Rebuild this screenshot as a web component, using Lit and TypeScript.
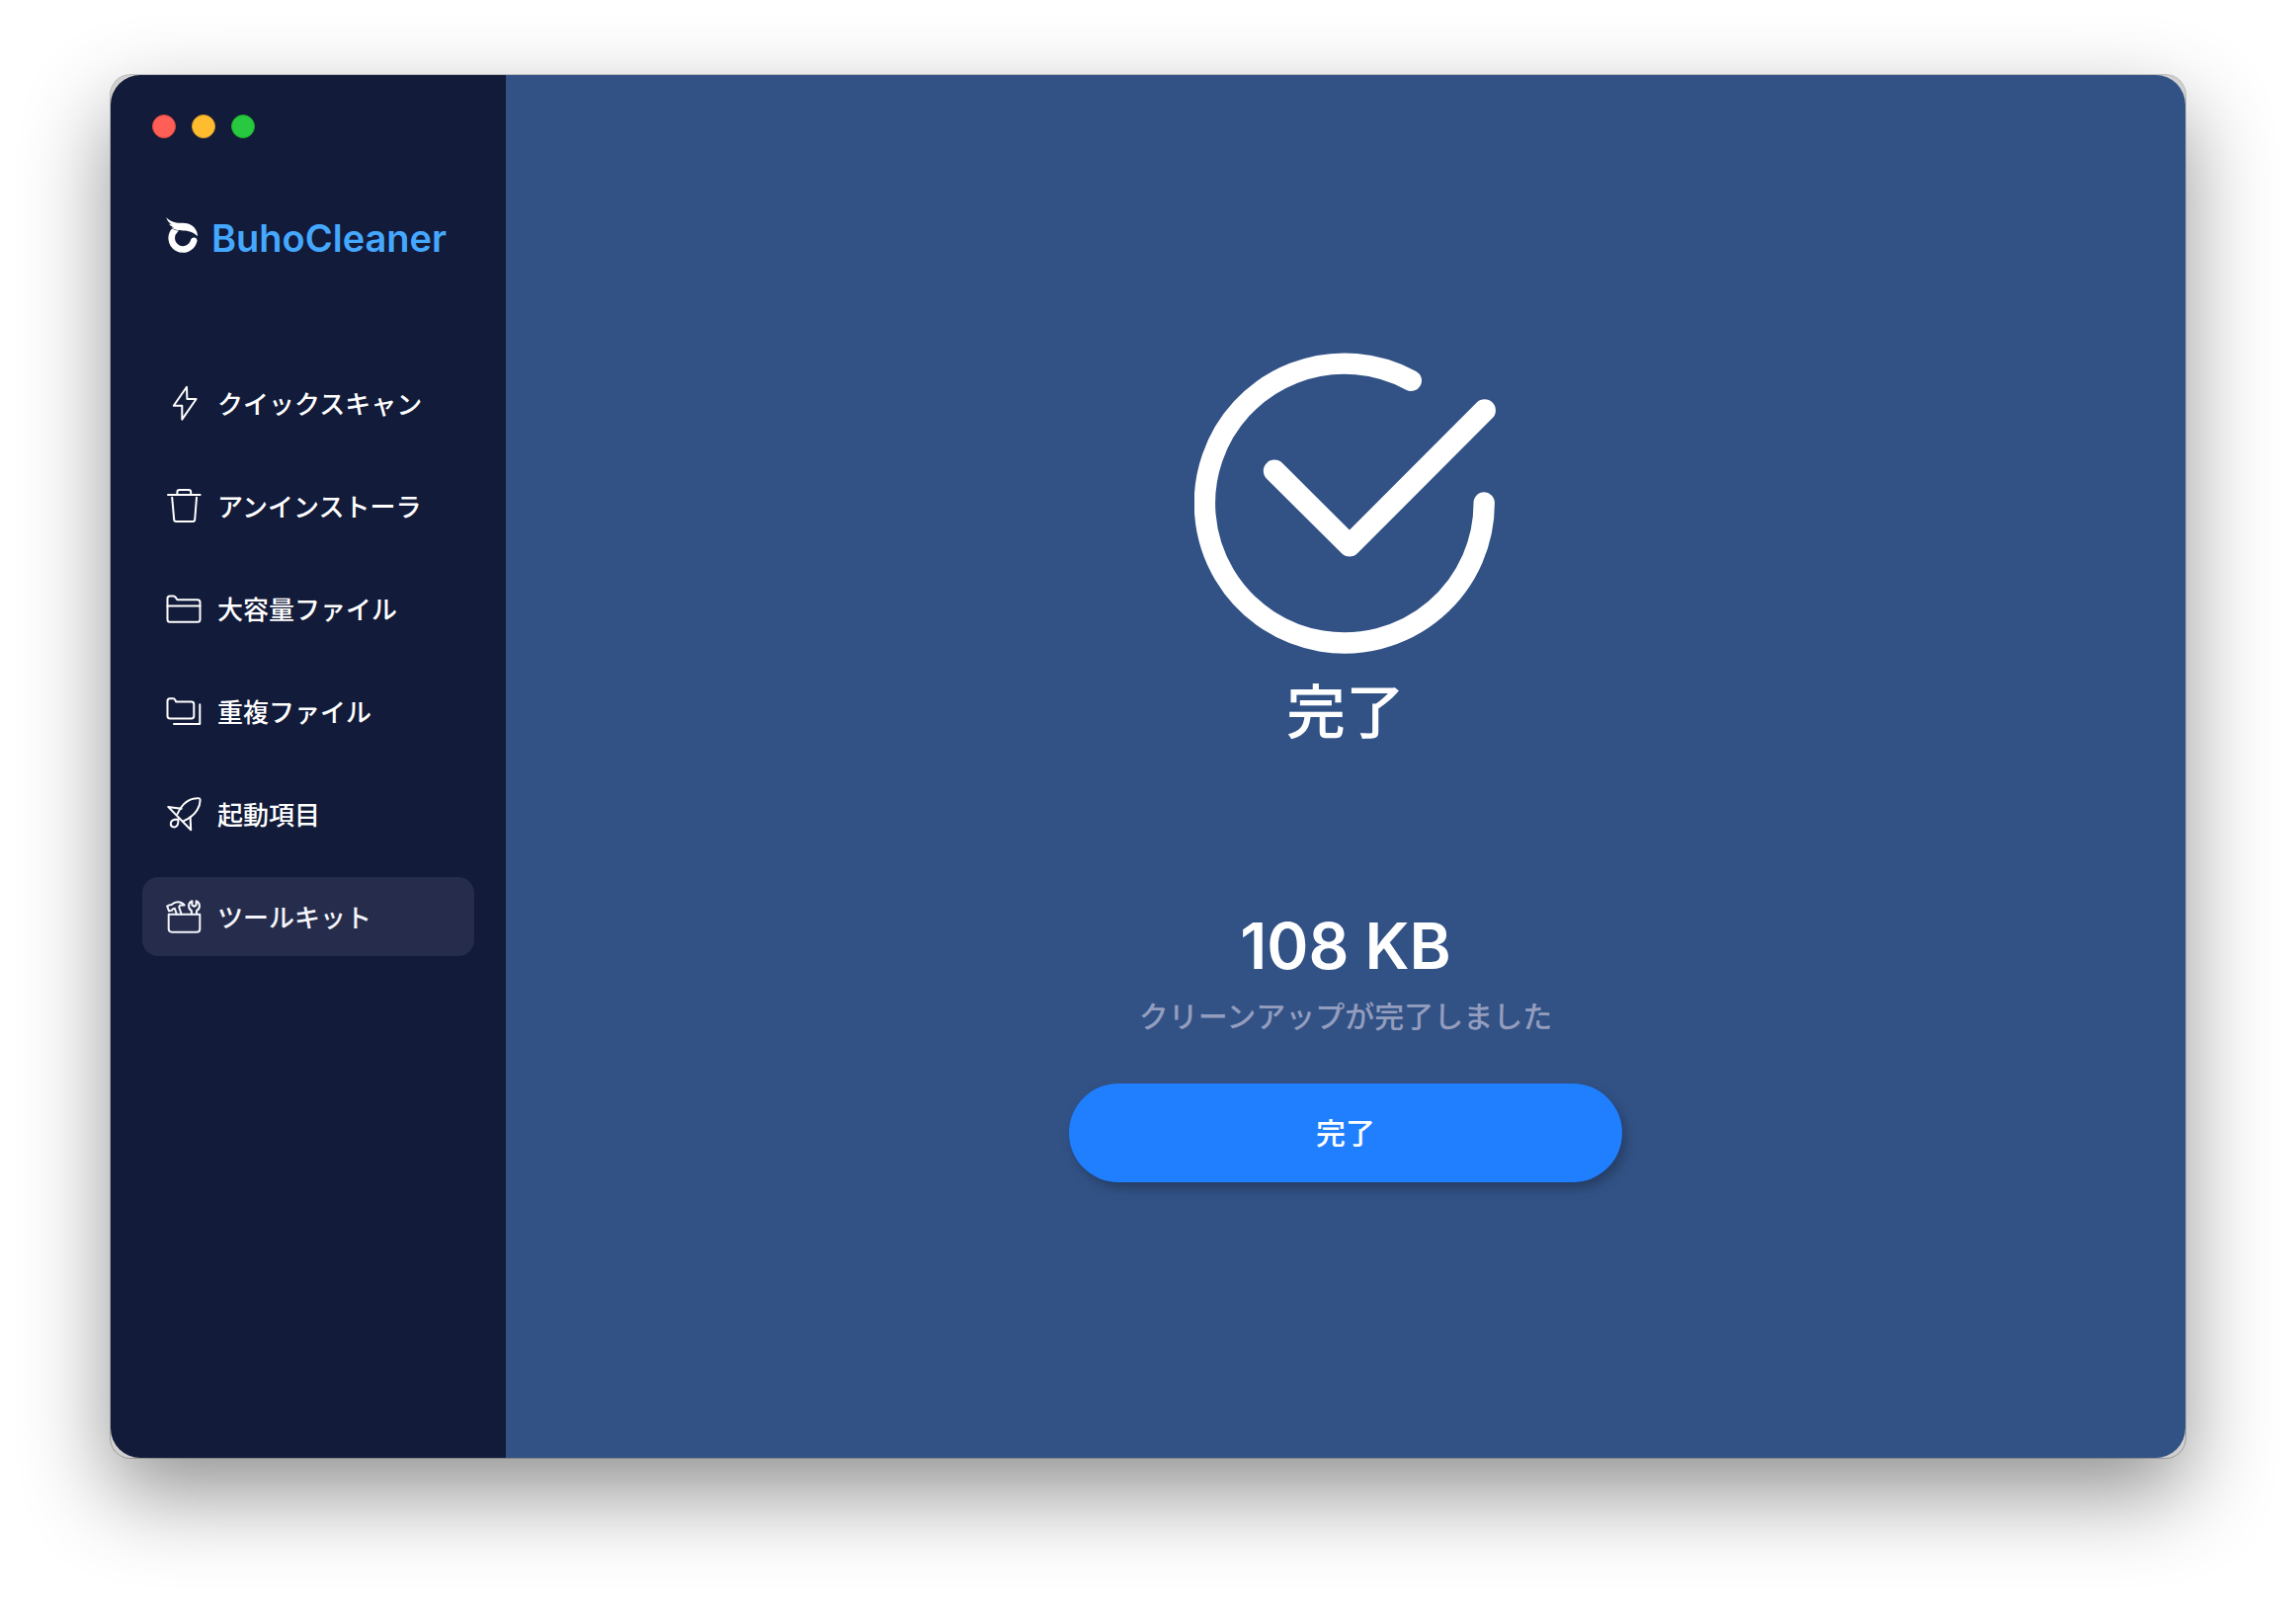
import { LitElement, html, css, svg, TemplateResult } from "lit";
import { customElement, property, state } from "lit/decorators.js";
import { classMap } from "lit/directives/class-map.js";

type IconName = "bolt" | "trash" | "folder" | "copies" | "rocket" | "toolkit";

const icons: Record<IconName, TemplateResult> = {
  bolt: svg`<path d="M21 1.8 L21.4 14 H30.6 L16.3 34.6 V20.7 H7.8 Z" />`,
  trash: svg`
    <path d="M2 7 H34.6" />
    <path d="M11.4 7 V4.2 Q11.4 2 13.6 2 H23 Q25.2 2 25.2 4.2 V7" />
    <path d="M6.2 9.8 L8.2 32.2 Q8.4 34 10.2 34 H27.2 Q29 34 29.2 32.2 L31 9.8" />`,
  folder: svg`
    <path d="M1.5 29.2 V8 Q1.5 5.4 4 5.4 H7.6 Q8.8 5.4 9.6 6.6 L11.4 9.2 H32 Q34.5 9.2 34.5 11.7 V29.2 Q34.5 31.7 32 31.7 H4 Q1.5 31.7 1.5 29.2 Z" />
    <path d="M1.5 15.6 H34.5" />`,
  copies: svg`
    <path d="M1.5 23 V7.8 Q1.5 5.3 4 5.3 H7.4 Q8.6 5.3 9.2 6.6 L10.2 8.4 H25.8 Q28.3 8.4 28.3 10.9 V23 Q28.3 25.4 25.8 25.4 H4 Q1.5 25.4 1.5 23 Z" />
    <path d="M34.3 11.2 V31 H8" />`,
  rocket: svg`
    <path d="M11.6 18 C14 12 20 3.6 29 2.5 C31.4 2.2 34 1.8 34.3 2.8 C34.8 5 34 10 31.6 14 C28.6 19 23.6 22.6 18 25.2" />
    <path d="M15.6 12.8 L2.2 10.9 L25.2 34.2 L24.6 21.4" />
    <path d="M12.4 23.6 C12.6 27.4 12 31.4 8.2 31.4 C6 31.4 4.8 29.8 4.8 28 C4.8 24.4 8.6 23.6 12.4 23.6 Z" />`,
  toolkit: svg`
    <path d="M2.7 15.8 H34.3 V30.4 Q34.3 33.7 31 33.7 H6 Q2.7 33.7 2.7 30.4 Z" />
    <path d="M10.8 15.6 L8.9 9.8 L6.6 10.4 L6.2 11.6 L3 12.4 L1.2 7.4 L4 6.2 L5.6 6 C8 3.4 14.6 1 18.6 6.4 L14.2 6.6 L13.2 8.2 L15.6 15.6" />
    <path d="M25.9 15.6 V12.2 C22 9.8 22 4 26.4 2.2 V6.4 L28.4 7.8 L30.6 6.4 V2.2 C35 4 35 9.8 31 12.2 V15.6" />`,
};

@customElement("line-icon")
export class LineIcon extends LitElement {
  @property() name: IconName = "bolt";

  static styles = css`
    :host {
      display: block;
      width: 36px;
      height: 36px;
      flex: none;
    }
    .glyph {
      display: block;
      width: 100%;
      height: 100%;
      fill: none;
      stroke: currentColor;
      stroke-width: 2;
      stroke-linejoin: round;
      stroke-linecap: round;
    }
  `;

  render() {
    return html`<svg class="glyph" viewBox="0 0 36 36" aria-hidden="true">${icons[this.name]}</svg>`;
  }
}

const sections: { icon: IconName; label: string }[] = [
  { icon: "bolt", label: "クイックスキャン" },
  { icon: "trash", label: "アンインストーラ" },
  { icon: "folder", label: "大容量ファイル" },
  { icon: "copies", label: "重複ファイル" },
  { icon: "rocket", label: "起動項目" },
  { icon: "toolkit", label: "ツールキット" },
];

@customElement("side-bar")
export class SideBar extends LitElement {
  @state() private selected = 5;

  static styles = css`
    :host {
      display: flex;
      flex-direction: column;
      box-sizing: border-box;
      width: 400px;
      flex: none;
      padding: 40px 32px 32px;
      background: #121b39;
      color: #fff;
    }
    .lights {
      display: flex;
      gap: 16px;
      padding-left: 10px;
    }
    .light {
      width: 24px;
      height: 24px;
      padding: 0;
      border: 1px solid;
      border-radius: 50%;
    }
    .close {
      background: #ff5f57;
      border-color: #e2463f;
    }
    .minimize {
      background: #febc2e;
      border-color: #e0a028;
    }
    .zoom {
      background: #28c840;
      border-color: #1dad2b;
    }
    .brand {
      display: flex;
      align-items: flex-start;
      gap: 12px;
      margin-top: 80px;
      padding-left: 22px;
      height: 44px;
    }
    .mark {
      display: block;
      width: 36px;
      height: 36px;
      flex: none;
      overflow: visible;
    }
    .name {
      color: #45a8ff;
      font-size: 38px;
      line-height: 42px;
      font-weight: 600;
    }
    .menu {
      display: flex;
      flex-direction: column;
      gap: 24px;
      margin: 104px 0 0;
      padding: 0;
      list-style: none;
    }
    .item {
      display: flex;
      align-items: center;
      gap: 16px;
      width: 100%;
      height: 80px;
      padding: 0 24px;
      border: 0;
      border-radius: 16px;
      background: transparent;
      color: inherit;
      font: inherit;
      font-size: 26px;
      line-height: 36px;
      font-weight: 500;
      text-align: left;
    }
    .item.current {
      background: #262d4c;
      color: #f4f5fa;
    }
    .label {
      padding-top: 4px;
    }
  `;

  render() {
    return html`
      <div class="lights">
        <button class="light close" aria-label="閉じる"></button>
        <button class="light minimize" aria-label="しまう"></button>
        <button class="light zoom" aria-label="拡大"></button>
      </div>
      <div class="brand">
        <svg class="mark" viewBox="0 0 36 36" aria-hidden="true">
          <path d="M30.2 23.8 A11.4 11.4 0 1 1 11.5 12.6" fill="none" stroke="#fff" stroke-width="6.6" stroke-linecap="round" />
          <path
            d="M2.2 0.2 C5 3 8 4.4 11.4 5.2 C15 6 18 5.4 22 6 C29 7.2 33.8 12 34 19.2 C29.6 14.6 24.6 13.6 19.4 13.4 C14.6 13.2 10.6 13 7.6 10.6 L10 10.4 C7.6 9.6 6 8.4 5 6.6 L8 7.4 C5.4 5.8 3.2 3.4 2.2 0.2 Z"
            fill="#fff" stroke="#121b39" stroke-width="1" paint-order="stroke" />
        </svg>
        <span class="name">BuhoCleaner</span>
      </div>
      <nav>
        <ul class="menu">
          ${sections.map(
            (s, i) => html`<li>
              <button
                class=${classMap({ item: true, current: i === this.selected })}
                aria-current=${i === this.selected ? "page" : "false"}
                @click=${() => (this.selected = i)}
              >
                <line-icon .name=${s.icon}></line-icon>
                <span class="label">${s.label}</span>
              </button>
            </li>`
          )}
        </ul>
      </nav>
    `;
  }
}

@customElement("result-pane")
export class ResultPane extends LitElement {
  static styles = css`
    :host {
      display: flex;
      flex: 1;
      flex-direction: column;
      align-items: center;
      padding: 281px 32px 32px;
      background: #325286;
      color: #fff;
    }
    .check {
      display: block;
      width: 306px;
      height: 306px;
      fill: none;
      stroke: #fff;
      stroke-linecap: round;
      stroke-linejoin: round;
    }
    .title {
      margin: 22px 0 0;
      font-size: 60px;
      line-height: 72px;
      font-weight: 500;
    }
    .amount {
      margin: 169px 0 0;
      font-size: 64px;
      line-height: 64px;
      font-weight: 600;
    }
    .note {
      margin: 21px 0 0;
      color: #949dbd;
      font-size: 30px;
      line-height: 36px;
      font-weight: 500;
    }
    .done {
      width: 560px;
      max-width: 100%;
      height: 100px;
      margin-top: 50px;
      padding: 0;
      border: 0;
      border-radius: 50px;
      background: #1f7fff;
      box-shadow: 4px 6px 12px rgba(0, 0, 0, 0.26);
      color: #fff;
      font: inherit;
      font-size: 30px;
      line-height: 36px;
      font-weight: 500;
    }
  `;

  render() {
    return html`
      <svg class="check" viewBox="0 0 306 306" aria-hidden="true">
        <path d="M293.2 152 A141.4 141.4 0 1 1 219.3 28.3" stroke-width="21.4" />
        <path d="M81 119.8 L157 195.4 L293.7 58.4" stroke-width="22.4" />
      </svg>
      <h1 class="title">完了</h1>
      <p class="amount">108 KB</p>
      <p class="note">クリーンアップが完了しました</p>
      <button class="done">完了</button>
    `;
  }
}

@customElement("app-root")
export class AppRoot extends LitElement {
  static styles = css`
    :host {
      display: flex;
      box-sizing: border-box;
      min-height: 100vh;
      padding: 76px 112px 148px;
      overflow: hidden;
      background: #fff;
      font-family: Inter, "Noto Sans CJK JP", sans-serif;
    }
    .window {
      display: flex;
      flex: 1;
      border-radius: 20px;
      background: #d0d0d0;
      box-shadow: 0 0 0 1px rgba(0, 0, 0, 0.22), 0 36px 88px rgba(0, 0, 0, 0.43);
    }
    .content {
      display: flex;
      flex: 1;
      overflow: hidden;
      border-radius: 30px;
    }
  `;

  render() {
    return html`
      <div class="window">
        <div class="content">
          <side-bar></side-bar>
          <result-pane role="main"></result-pane>
        </div>
      </div>
    `;
  }
}
